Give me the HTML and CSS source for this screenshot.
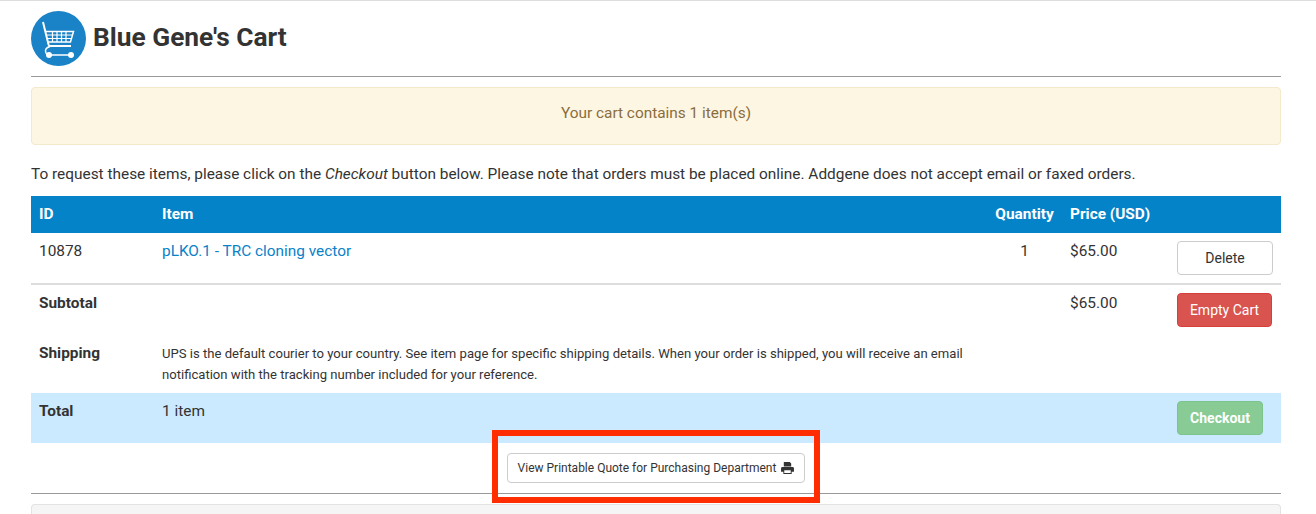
FILE: index.html
```html
<!DOCTYPE html>
<html lang="en">
<head>
<meta charset="utf-8">
<title>Blue Gene's Cart</title>
<link rel="stylesheet" href="styles.css">
</head>
<body>
<main class="page">
  <header class="title-row">
    <svg class="logo" viewBox="0 0 55 55" aria-hidden="true">
      <circle cx="27.500" cy="27.500" r="27.500" fill="#1a82c6"/>
      <g fill="none" stroke="#fff">
        <path d="M12 11l5.500 22.500c.3 1 .8 1.500 1.800 1.500h20.700" stroke-width="2"/>
        <path d="M15 20.500h27.500L39.500 31H17.500" stroke-width="1.500"/>
        <path d="M16 24h25.500M16.800 27.500h24M21.500 20.500V31M26 20.500V31M30.500 20.500V31M35 20.500V31" stroke-width="1.200"/>
        <path d="M19 35.500c-2.800.8-4.500 2.300-4.500 4.300 0 2.200 1.600 4.200 3.500 4.200h22" stroke-width="1.500"/>
      </g>
      <circle cx="18" cy="44" r="3" fill="#fff"/>
      <circle cx="40" cy="44" r="3" fill="#fff"/>
    </svg>
    <h1 class="title">Blue Gene's Cart</h1>
  </header>
  <hr class="rule">
  <div class="alert">Your cart contains 1 item(s)</div>
  <p class="intro">To request these items, please click on the <em>Checkout</em> button below. Please note that orders must be placed online. Addgene does not accept email or faxed orders.</p>
  <table class="cart">
    <colgroup>
      <col class="col-id"><col class="col-item"><col class="col-qty"><col class="col-price"><col class="col-act">
    </colgroup>
    <thead>
      <tr class="head"><th>ID</th><th>Item</th><th class="center">Quantity</th><th>Price (USD)</th><th></th></tr>
    </thead>
    <tbody>
      <tr class="line">
        <td>10878</td>
        <td><a class="link" href="#">pLKO.1 - TRC cloning vector</a></td>
        <td class="center">1</td>
        <td>$65.00</td>
        <td><button class="btn btn-delete">Delete</button></td>
      </tr>
      <tr>
        <th>Subtotal</th><td></td><td></td><td>$65.00</td>
        <td><button class="btn btn-danger">Empty Cart</button></td>
      </tr>
      <tr class="ship">
        <th>Shipping</th>
        <td colspan="2" class="note">UPS is the default courier to your country. See item page for specific shipping details. When your order is shipped, you will receive an email notification with the tracking number included for your reference.</td>
        <td></td><td></td>
      </tr>
      <tr class="total">
        <th>Total</th><td>1 item</td><td></td><td></td>
        <td><button class="btn btn-success">Checkout</button></td>
      </tr>
    </tbody>
  </table>
  <div class="quote">
    <div class="quote-wrap">
      <button class="btn btn-quote">View Printable Quote for Purchasing Department
        <svg class="print" viewBox="0 0 14 13" aria-hidden="true"><path fill="#333" fill-rule="evenodd" d="M3 0h6.500L11 1.500V5H3zM1.500 5.500h11c.8 0 1.500.7 1.500 1.500v3.500h-2.500V13h-9v-2.500H0V7c0-.8.7-1.500 1.500-1.500zM3.500 9v3h7V9z"/></svg>
      </button>
      <div class="highlight"></div>
    </div>
  </div>
  <hr class="rule rule-b">
  <div class="panel"></div>
</main>
</body>
</html>
```

FILE: styles.css
```css
* { box-sizing: border-box; }
html, body { margin: 0; padding: 0; height: 514px; overflow: hidden; }
body {
  font-family: Roboto, "Liberation Sans", sans-serif;
  font-size: 15.4px;
  line-height: 20px;
  color: #333;
  background: #fff;
  border-top: 1px solid #ddd;
}
.page { margin: 0 35px 0 31px; }
.title-row { display: flex; align-items: center; gap: 7px; padding-top: 10px; height: 75px; padding-bottom: 10px; }
.logo { width: 55px; height: 55px; flex: none; }
.title { margin: 0 0 3px; font-size: 26.300px; line-height: 32px; font-weight: 700; color: #333; }
.rule { margin: 0; border: 0; border-top: 1px solid #999; height: 1px; }
.alert {
  margin-top: 10px;
  height: 58px;
  display: flex; align-items: center; justify-content: center;
  padding-bottom: 6px;
  background: #fdf6e3;
  border: 1px solid #f5e9cb;
  border-radius: 4px;
  color: #8a6d3b;
}
.intro { margin: 19px 0 12px; }
.cart { width: 1250px; table-layout: fixed; border-collapse: collapse; }
.col-id { width: 123px; }
.col-item { width: 833px; }
.col-qty { width: 75px; }
.col-price { width: 107px; }
.col-act { width: 112px; }
.cart th, .cart td { padding: 8px; text-align: left; vertical-align: top; font-weight: 400; }
.cart th { font-weight: 700; }
.cart .center { text-align: center; }
.head th { background: #0583c9; color: #fff; height: 37px; }
.line td { border-bottom: 2px solid #ddd; }
.line { height: 51px; }
.ship { height: 58px; }
.cart .note { font-size: 13.100px; line-height: 21px; padding-right: 80px; }
.total { height: 50px; }
.total th, .total td { background: #cceaff; }
.link { color: #0a82c8; text-decoration: none; }
.btn {
  display: inline-block;
  font-family: inherit;
  font-size: 14px;
  line-height: 20px;
  height: 34px;
  border-radius: 4px;
  border: 1px solid #ccc;
  background: #fff;
  color: #333;
  padding: 0;
  text-align: center;
}
.btn-delete { width: 96px; }
.btn-danger { width: 95px; background: #d9534f; border-color: #d43f3a; color: #fff; }
.btn-success { width: 86px; background: #88cb94; border-color: #7cc48b; color: #fff; font-weight: 700; }
.quote { display: flex; justify-content: center; padding: 10px 0 9px; height: 50px; }
.quote-wrap { position: relative; display: flex; }
.btn-quote { width: 298px; height: 30px; font-size: 12px; line-height: 18px; display: flex; align-items: center; justify-content: center; gap: 5px; }
.print { width: 13px; height: 12px; }
.highlight {
  position: absolute;
  left: -15px; right: -15px; top: -23px; bottom: -19px;
  border: 6px solid #ff2d00;
  pointer-events: none;
}
.panel { margin-top: 10px; height: 10px; background: #f5f5f5; border: 1px solid #e3e3e3; border-bottom: 0; border-radius: 4px 4px 0 0; }
```
